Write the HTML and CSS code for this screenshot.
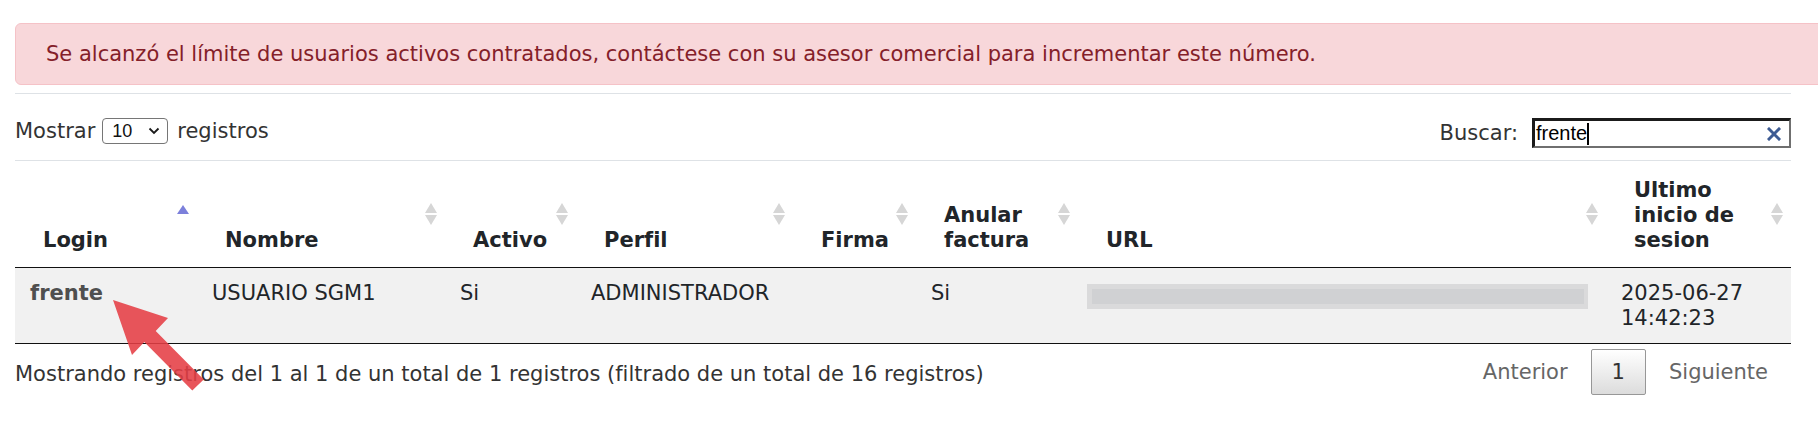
FILE: index.html
```html
<!DOCTYPE html>
<html lang="es">
<head>
<meta charset="utf-8">
<title>Usuarios</title>
<link rel="stylesheet" href="styles.css">
</head>
<body>
<div class="page">
  <div class="alert">Se alcanzó el límite de usuarios activos contratados, contáctese con su asesor comercial para incrementar este número.</div>

  <div class="toolbar">
    <div class="length">
      <span>Mostrar</span>
      <div class="select"><span>10</span>
        <svg class="chev" width="12" height="8" viewBox="0 0 12 8"><path d="M1.5 1.5 L6 6 L10.5 1.5" fill="none" stroke="#1a1a1a" stroke-width="1.8"/></svg>
      </div>
      <span>registros</span>
    </div>
    <div class="filter">
      <span>Buscar:</span>
      <div class="search"><span class="val">frente</span><span class="caret"></span>
        <svg class="clear" width="14" height="14" viewBox="0 0 14 14"><path d="M2 2 L12 12 M12 2 L2 12" stroke="#3d5b93" stroke-width="3" stroke-linecap="square"/></svg>
      </div>
    </div>
  </div>

  <table class="grid">
    <colgroup>
      <col class="c-login"><col class="c-nombre"><col class="c-activo"><col class="c-perfil"><col class="c-firma"><col class="c-anular"><col class="c-url"><col class="c-ultimo">
    </colgroup>
    <thead>
      <tr>
        <th class="asc">Login</th>
        <th class="both">Nombre</th>
        <th class="both">Activo</th>
        <th class="both">Perfil</th>
        <th class="both">Firma</th>
        <th class="both">Anular factura</th>
        <th class="both">URL</th>
        <th class="both">Ultimo inicio de sesion</th>
      </tr>
    </thead>
    <tbody>
      <tr>
        <td><span class="login">frente</span></td>
        <td>USUARIO SGM1</td>
        <td>Si</td>
        <td>ADMINISTRADOR</td>
        <td></td>
        <td>Si</td>
        <td><div class="blur"><div class="band"></div></div></td>
        <td>2025-06-27<br>14:42:23</td>
      </tr>
    </tbody>
  </table>

  <div class="footer">
    <div class="info">Mostrando registros del 1 al 1 de un total de 1 registros (filtrado de un total de 16 registros)</div>
    <div class="paginate">
      <span class="pbtn disabled">Anterior</span>
      <span class="pbtn current">1</span>
      <span class="pbtn disabled">Siguiente</span>
    </div>
  </div>

  <svg class="annot" width="120" height="110" viewBox="0 0 120 110">
    <polygon points="13,10 68,28 55.7,40.9 103.7,89.4 92.3,100.6 44.3,52.1 32,65" fill="#e53e44" fill-opacity="0.88"/>
  </svg>
</div>
</body>
</html>
```

FILE: styles.css
```css
html, body {
  margin: 0;
  padding: 0;
  background: #ffffff;
  overflow: hidden;
}

body {
  font-family: "DejaVu Sans", Verdana, sans-serif;
  font-size: 21px;
  color: #333333;
}

.page {
  position: relative;
  padding: 23px 27px 0 15px;
}

.alert {
  margin-right: -60px;
  background: #f8d7da;
  border: 1px solid #f5c2c7;
  border-radius: 6px;
  color: #842029;
  padding: 18px 30px;
  line-height: 24px;
  white-space: nowrap;
}

.toolbar {
  margin-top: 8px;
  border-top: 1px solid #dee2e6;
  border-bottom: 1px solid #dee2e6;
  padding: 24px 0 12px;
  display: flex;
  justify-content: space-between;
  align-items: flex-start;
}

.length {
  display: flex;
  align-items: center;
  height: 26px;
}

.select {
  box-sizing: border-box;
  width: 66px;
  height: 26px;
  margin: 0 9px 0 7px;
  border: 1px solid #767676;
  border-radius: 4px;
  display: flex;
  align-items: center;
  justify-content: space-between;
  padding: 0 7px 0 9px;
  font-family: "Liberation Sans", Arial, sans-serif;
  font-size: 18px;
  color: #111;
}

.filter {
  display: flex;
  align-items: center;
  gap: 14px;
  height: 30px;
}

.search {
  box-sizing: border-box;
  width: 259px;
  height: 30px;
  border-style: solid;
  border-width: 3px 2px 2px 3px;
  border-color: #1b1b1b #6f6f6f #6f6f6f #1b1b1b;
  display: flex;
  align-items: center;
  padding: 0 8px 0 1px;
  font-family: "Liberation Sans", Arial, sans-serif;
  font-size: 20px;
  color: #000;
}

.search .caret {
  width: 2px;
  height: 22px;
  background: #000;
}

.search .clear {
  margin-left: auto;
}

.grid {
  width: 1776px;
  table-layout: fixed;
  border-collapse: separate;
  border-spacing: 0;
  color: #212529;
}

.c-login { width: 182px; }
.c-nombre { width: 248px; }
.c-activo { width: 131px; }
.c-perfil { width: 217px; }
.c-firma { width: 123px; }
.c-anular { width: 162px; }
.c-url { width: 528px; }
.c-ultimo { width: 185px; }

.grid th {
  position: relative;
  text-align: left;
  vertical-align: bottom;
  font-weight: bold;
  line-height: 25px;
  padding: 17px 30px 14px 28px;
  border-bottom: 1px solid #111;
}

.grid th.both::before,
.grid th.both::after,
.grid th.asc::before {
  content: "";
  position: absolute;
  right: 8px;
  width: 0;
  height: 0;
  border-left: 6px solid transparent;
  border-right: 6px solid transparent;
}

.grid th.both::before {
  top: calc(50% - 11px);
  border-bottom: 10px solid #d6d6d6;
}

.grid th.both::after {
  top: calc(50% + 1px);
  border-top: 10px solid #d6d6d6;
}

.grid th.asc::before {
  top: calc(50% - 9px);
  border-bottom: 9px solid #7c80db;
}

.grid tbody tr {
  background: #f1f1f1;
}

.grid td {
  vertical-align: top;
  line-height: 25px;
  padding: 13px 15px 12px;
  border-bottom: 1px solid #111;
}

.login {
  font-weight: bold;
  color: #4f4f4f;
}

.blur {
  margin: 3px 0 0 -6px;
  width: 501px;
  height: 25px;
  background: #dadadb;
  display: flex;
  align-items: center;
  padding-left: 5px;
  box-sizing: border-box;
}

.blur .band {
  width: 492px;
  height: 15px;
  background: #d0d1d3;
}

.footer {
  display: flex;
  justify-content: space-between;
  align-items: flex-start;
}

.info {
  padding-top: 18px;
  line-height: 24px;
}

.paginate {
  display: flex;
  padding-top: 5px;
  margin-right: 2px;
}

.pbtn {
  line-height: 24px;
  padding: 10px 20px;
  margin-left: 2px;
  border: 1px solid transparent;
  border-radius: 2px;
}

.pbtn.disabled {
  color: #666666;
}

.pbtn.current {
  color: #333333;
  border-color: #979797;
  background: linear-gradient(to bottom, #ffffff 0%, #dcdcdc 100%);
}

.annot {
  position: absolute;
  left: 100px;
  top: 290px;
}
```
